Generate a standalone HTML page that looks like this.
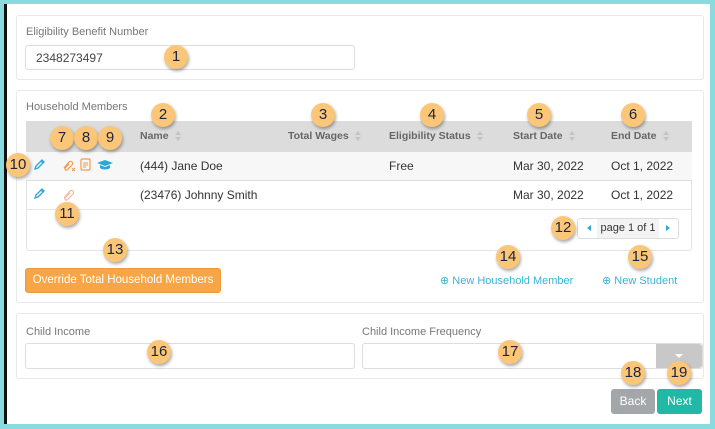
<!DOCTYPE html>
<html><head><meta charset="utf-8"><style>
*{box-sizing:border-box;margin:0;padding:0}
body{width:715px;height:429px;background:#8adbe0;position:relative;overflow:hidden;font-family:"Liberation Sans",sans-serif;color:#333;font-size:12px}
.abs{position:absolute}
.main{left:4px;top:4px;width:706px;height:420px;background:#fff;border-left:3px solid #111}
.panel{border:1px solid #e8e8e8;border-radius:3px;background:#fff}
.lbl{color:#777;font-size:11px}
.input{border:1px solid #ddd;border-radius:3px;background:#fff}
.th{font-weight:bold;color:#666;font-size:10.5px}
.sort{display:inline-block;width:7px;height:10px;vertical-align:middle;margin-left:6px;position:relative}
.sort:before{content:"";position:absolute;left:0;top:0;border-left:3.5px solid transparent;border-right:3.5px solid transparent;border-bottom:4px solid #c4c4c4}
.sort:after{content:"";position:absolute;left:0;top:6px;border-left:3.5px solid transparent;border-right:3.5px solid transparent;border-top:4px solid #c4c4c4}
.b{position:absolute;width:24px;height:24px;border-radius:50%;background:#fcc678;box-shadow:1px 2px 3px rgba(0,0,0,.35);color:#1c2440;font-size:15px;text-align:center;line-height:24px}
.link{color:#3ab3d3;font-size:11px}
</style></head><body>
<div class="abs main"></div>
<div class="abs panel" style="left:16px;top:15px;width:688px;height:65px"></div>
<div class="abs lbl" style="left:26px;top:26px">Eligibility Benefit Number</div>
<div class="abs input" style="left:25px;top:45px;width:330px;height:25px"></div>
<div class="abs" style="left:36px;top:51px;color:#444">2348273497</div>

<div class="abs panel" style="left:16px;top:90px;width:688px;height:213px"></div>
<div class="abs lbl" style="left:26px;top:101px">Household Members</div>
<div class="abs" style="left:26px;top:121px;width:666px;height:130px;border:1px solid #e3e3e3;border-radius:3px"></div>
<div class="abs" style="left:26px;top:121px;width:666px;height:31px;background:#dcdcdc"></div>
<div class="abs" style="left:26px;top:152px;width:666px;height:29px;background:#f7f7f7;border-bottom:1px solid #ddd"></div>
<div class="abs" style="left:26px;top:209px;width:666px;height:1px;background:#e6e6e6"></div>
<div class="abs th" style="left:140px;top:130px">Name<span class="sort"></span></div>
<div class="abs th" style="left:288px;top:130px">Total Wages<span class="sort"></span></div>
<div class="abs th" style="left:389px;top:130px">Eligibility Status<span class="sort"></span></div>
<div class="abs th" style="left:513px;top:130px">Start Date<span class="sort"></span></div>
<div class="abs th" style="left:611px;top:130px">End Date<span class="sort"></span></div>
<div class="abs" style="left:140px;top:159px">(444) Jane Doe</div>
<div class="abs" style="left:389px;top:159px">Free</div>
<div class="abs" style="left:513px;top:159px">Mar 30, 2022</div>
<div class="abs" style="left:611px;top:159px">Oct 1, 2022</div>
<div class="abs" style="left:140px;top:188px">(23476) Johnny Smith</div>
<div class="abs" style="left:513px;top:188px">Mar 30, 2022</div>
<div class="abs" style="left:611px;top:188px">Oct 1, 2022</div>
<svg class="abs" style="left:33px;top:159px" width="12" height="12" viewBox="0 0 12 12"><path d="M2 10l1-3 6-6 2 2-6 6z M8 2l2 2" fill="none" stroke="#2aa8d8" stroke-width="1.3"/></svg>
<svg class="abs" style="left:33px;top:188px" width="12" height="12" viewBox="0 0 12 12"><path d="M2 10l1-3 6-6 2 2-6 6z M8 2l2 2" fill="none" stroke="#2aa8d8" stroke-width="1.3"/></svg>
<svg class="abs" style="left:62px;top:159px" width="14" height="13" viewBox="0 0 14 13"><path d="M2 9l5-6a2 2 0 0 1 3 3l-5 5a1.5 1.5 0 0 1-2-2l4-4" fill="none" stroke="#f59a4a" stroke-width="1.2"/><path d="M10 9l3 3M13 9l-3 3" stroke="#f59a4a" stroke-width="1"/></svg>
<svg class="abs" style="left:80px;top:158px" width="11" height="13" viewBox="0 0 11 13"><rect x="1" y="1" width="9" height="11" rx="1" fill="none" stroke="#f59a4a" stroke-width="1.2"/><path d="M3 5h5M3 7h5M3 9h3" stroke="#f59a4a"/></svg>
<svg class="abs" style="left:97px;top:159px" width="16" height="12" viewBox="0 0 16 12"><path d="M0 4l8-3 8 3-8 3z" fill="#2aa8d8"/><path d="M3 6v3c2 2 8 2 10 0V6l-5 2z" fill="#2aa8d8"/></svg>
<svg class="abs" style="left:62px;top:188px" width="13" height="13" viewBox="0 0 13 13"><path d="M2 10l6-7a2 2 0 0 1 3 3l-6 6a1.5 1.5 0 0 1-2-2l5-5" fill="none" stroke="#f7b79a" stroke-width="1.2"/></svg>
<div class="abs" style="left:577px;top:218px;width:102px;height:21px;border:1px solid #ddd;border-radius:3px;background:#fff"></div>
<div class="abs" style="left:597px;top:219px;width:62px;height:19px;background:#f3f3f3;font-size:11px;line-height:19px;text-align:center">page 1 of 1</div>
<div class="abs" style="left:587px;top:225px;border-top:3px solid transparent;border-bottom:3px solid transparent;border-right:4px solid #2aa8d8"></div>
<div class="abs" style="left:666px;top:225px;border-top:3px solid transparent;border-bottom:3px solid transparent;border-left:4px solid #2aa8d8"></div>
<div class="abs" style="left:25px;top:268px;width:196px;height:25px;background:#f8a545;border:1px solid #eb9a3c;border-radius:3px;color:#fff;font-size:11.5px;text-align:center;line-height:23px;white-space:nowrap">Override Total Household Members</div>
<div class="abs link" style="left:440px;top:274px">⊕ New Household Member</div>
<div class="abs link" style="left:602px;top:274px">⊕ New Student</div>

<div class="abs panel" style="left:16px;top:313px;width:688px;height:66px"></div>
<div class="abs lbl" style="left:26px;top:326px">Child Income</div>
<div class="abs input" style="left:25px;top:343px;width:330px;height:26px"></div>
<div class="abs lbl" style="left:362px;top:326px">Child Income Frequency</div>
<div class="abs input" style="left:362px;top:343px;width:341px;height:26px"></div>
<div class="abs" style="left:656px;top:344px;width:46px;height:24px;background:#c8c8c8;border-radius:0 3px 3px 0"></div>
<div class="abs" style="left:675px;top:354px;border-left:4px solid transparent;border-right:4px solid transparent;border-top:4px solid #fff"></div>
<div class="abs" style="left:611px;top:389px;width:44px;height:25px;background:#a3a7aa;border-radius:3px;color:#fff;text-align:center;line-height:25px">Back</div>
<div class="abs" style="left:657px;top:389px;width:45px;height:25px;background:#20b9a5;border-radius:3px;color:#fff;text-align:center;line-height:25px">Next</div>

<div class="b" style="left:164px;top:45px">1</div>
<div class="b" style="left:151px;top:103px">2</div>
<div class="b" style="left:311px;top:103px">3</div>
<div class="b" style="left:420px;top:103px">4</div>
<div class="b" style="left:527px;top:103px">5</div>
<div class="b" style="left:621px;top:103px">6</div>
<div class="b" style="left:50px;top:126px">7</div>
<div class="b" style="left:74px;top:126px">8</div>
<div class="b" style="left:98px;top:126px">9</div>
<div class="b" style="left:6px;top:153px">10</div>
<div class="b" style="left:55px;top:202px">11</div>
<div class="b" style="left:551px;top:216px">12</div>
<div class="b" style="left:103px;top:238px">13</div>
<div class="b" style="left:496px;top:245px">14</div>
<div class="b" style="left:628px;top:245px">15</div>
<div class="b" style="left:147px;top:340px">16</div>
<div class="b" style="left:498px;top:340px">17</div>
<div class="b" style="left:621px;top:361px">18</div>
<div class="b" style="left:667px;top:361px">19</div>
</body></html>
